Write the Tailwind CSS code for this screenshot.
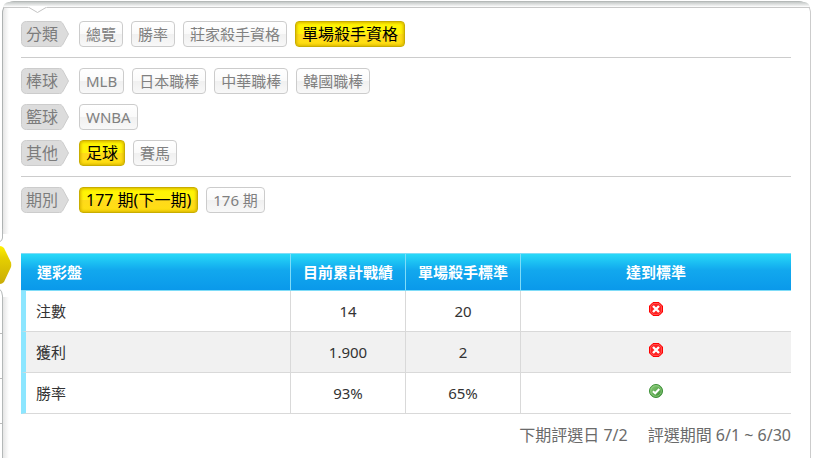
<!DOCTYPE html>
<html lang="zh-Hant">
<head>
  <meta charset="UTF-8" />
  <meta name="viewport" content="width=device-width, initial-scale=1" />
  <title>單場殺手資格</title>
  <script src="https://cdn.jsdelivr.net/npm/@tailwindcss/browser@4"></script>
  <style>
    body {
      font-family: "Noto Sans", "Noto Sans CJK TC", sans-serif;
    }

    .label {
      width: 48px;
      height: 26px;
      padding-left: 5px;
      margin-right: 2px;
      font-size: 16px;
      line-height: 26px;
      color: #7c7c7c;
      position: relative;
    }

    .label svg {
      position: absolute;
      inset: 0;
      z-index: -1;
    }

    .tag {
      height: 26px;
      padding: 0 6px;
      border: 1px solid #ccc;
      border-radius: 4px;
      font-size: 15px;
      line-height: 24px;
      white-space: nowrap;
      color: #808080;
      background: linear-gradient(#fff, #fafafa 50%, #f0f0f0 50%, #f8f8f8);
    }

    .tag.on {
      border-color: #c9ae00;
      font-size: 16px;
      color: #000;
      background: linear-gradient(#fff600, #fff20c 50%, #ffd91c 50%, #ffe010);
      box-shadow: inset 0 0 3px 1px #d8b400;
    }
  </style>
</head>
<body class="bg-white min-h-screen flex flex-col">
  <!-- Shapes shared by the rows -->
  <svg class="absolute" width="0" height="0" aria-hidden="true">
    <defs>
      <linearGradient id="gold" x1="0" y1="0" x2="0" y2="1">
        <stop offset="0" stop-color="#fff000" />
        <stop offset="0.3" stop-color="#e6d000" />
        <stop offset="1" stop-color="#c9ac08" />
      </linearGradient>
      <linearGradient id="green" x1="0" y1="0" x2="1" y2="1">
        <stop offset="0" stop-color="#8fd07c" />
        <stop offset="1" stop-color="#35882e" />
      </linearGradient>
      <symbol id="arrow" viewBox="0 0 48 26">
        <path d="M5.500 .5H38.500Q40.500 .5 41.500 2L47.500 13L41.500 24Q40.500 25.500 38.500 25.500H5.500Q.5 25.500 .5 20.500V5.500Q.5 .5 5.500 .5Z" fill="#dcdcdc" stroke="#ccc" />
      </symbol>
      <symbol id="no" viewBox="0 0 14 14">
        <path d="M4 .5H10L13.500 4V10L10 13.500H4L.5 10V4Z" fill="#f22" stroke="#f00" stroke-linejoin="round" />
        <path d="M4.500 1.500H9.500L12.500 4.500V9.500L9.500 12.500H4.500L1.500 9.500V4.500Z" fill="none" stroke="#ff5050" />
        <path d="M4 4L10 10M10 4L4 10" stroke="#fff" stroke-width="2.400" />
      </symbol>
      <symbol id="yes" viewBox="0 0 14 14">
        <circle cx="7" cy="7" r="6.500" fill="url(#green)" stroke="#3b8f36" />
        <circle cx="7" cy="7" r="5.300" fill="none" stroke="#9bd58c" stroke-opacity=".7" />
        <path d="M3.900 7.200L6.200 9.300L10.300 5" fill="none" stroke="#fff" stroke-width="2" />
      </symbol>
    </defs>
  </svg>

  <main class="relative isolate flex-1 ml-[2px] mr-[2px] mt-[1px] pl-[18px] pr-[19px] border-l border-r border-t border-l-[#aeb2b2] border-r-[#ccc] border-t-[#b5b9b8] rounded-t-[12px] bg-linear-to-r from-[#e6e6e6] to-white to-[6px]">
    <div class="absolute inset-x-0 top-0 h-[6px] -z-10 rounded-t-[11px] bg-linear-to-b from-[#c4c8c7] to-white border-b border-[#c8c8c8]"></div>
    <svg class="absolute left-[25px] top-[4px]" width="19" height="8" aria-hidden="true">
      <path d="M0 0H19V1L9.500 7L0 1Z" fill="#fff" />
      <path d="M1 1.500L9.500 6.500L18 1.500" fill="none" stroke="#c4c4c4" />
    </svg>

    <!-- Side menu marker -->
    <svg class="absolute -left-[3px] top-[227px]" width="14" height="230" aria-hidden="true">
      <path d="M0 5H10V68H0Z" fill="#fff" />
      <path d="M2.500 0V9Q2 12 0 12.500M2.500 230V67Q2 62 0 60.500" fill="none" stroke="#b4b8b8" />
      <path d="M0 17Q2 17 4 19L11 33.500Q11.500 36 11 38L4 53Q2 55 0 55Z" fill="url(#gold)" />
      <path d="M0 104.500H2M0 149.500H2M0 194.500H2" stroke="#bbb" />
    </svg>

    <!-- Filters -->
    <nav class="pt-[19px]">
      <div class="flex gap-2 pb-[10px] border-b border-[#ccc]">
        <div class="label"><svg width="48" height="26"><use href="#arrow" /></svg>分類</div>
        <a href="#all" class="tag">總覽</a>
        <a href="#rate" class="tag">勝率</a>
        <a href="#banker" class="tag">莊家殺手資格</a>
        <a href="#single" class="tag on">單場殺手資格</a>
      </div>
      <div class="flex flex-col gap-[10px] py-[10px] border-b border-[#ccc]">
        <div class="flex gap-2">
          <div class="label"><svg width="48" height="26"><use href="#arrow" /></svg>棒球</div>
          <a href="#mlb" class="tag">MLB</a>
          <a href="#npb" class="tag">日本職棒</a>
          <a href="#cpbl" class="tag">中華職棒</a>
          <a href="#kbo" class="tag">韓國職棒</a>
        </div>
        <div class="flex gap-2">
          <div class="label"><svg width="48" height="26"><use href="#arrow" /></svg>籃球</div>
          <a href="#wnba" class="tag">WNBA</a>
        </div>
        <div class="flex gap-2">
          <div class="label"><svg width="48" height="26"><use href="#arrow" /></svg>其他</div>
          <a href="#soccer" class="tag on">足球</a>
          <a href="#horse" class="tag">賽馬</a>
        </div>
      </div>
      <div class="flex gap-2 pt-[10px]">
        <div class="label"><svg width="48" height="26"><use href="#arrow" /></svg>期別</div>
        <a href="#177" class="tag on">177 期(下一期)</a>
        <a href="#176" class="tag">176 期</a>
      </div>
    </nav>

    <!-- Standards -->
    <table class="mt-10 w-full table-fixed border-separate border-spacing-0 text-[15px] leading-5 text-[#333] text-center">
      <thead>
        <tr class="h-[38px] text-white bg-linear-to-b from-[#2adcf8] via-[#12a8ee] via-45% to-[#0a98ea]">
          <th class="pl-4 text-left border-y border-r border-[#7fdcf8]">運彩盤</th>
          <th class="w-[115px] border-y border-r border-[#7fdcf8]">目前累計戰績</th>
          <th class="w-[115px] border-y border-r border-[#7fdcf8]">單場殺手標準</th>
          <th class="border-y border-[#7fdcf8]">達到標準</th>
        </tr>
      </thead>
      <tbody>
        <tr class="h-[41px]">
          <td class="pl-[10px] text-left border-l-[5px] border-l-[#8ce6ff] border-b border-r border-b-[#d9d9d9] border-r-[#d9d9d9]">注數</td>
          <td class="border-b border-r border-[#d9d9d9]">14</td>
          <td class="border-b border-r border-[#d9d9d9]">20</td>
          <td class="pb-1 border-b border-[#d9d9d9]"><svg class="mx-auto" width="14" height="14" role="img" aria-label="未達"><use href="#no" /></svg></td>
        </tr>
        <tr class="h-[41px] bg-[#f1f1f1]">
          <td class="pl-[10px] text-left border-l-[5px] border-l-[#8ce6ff] border-b border-r border-b-[#d9d9d9] border-r-[#d9d9d9]">獲利</td>
          <td class="border-b border-r border-[#d9d9d9]">1.900</td>
          <td class="border-b border-r border-[#d9d9d9]">2</td>
          <td class="pb-1 border-b border-[#d9d9d9]"><svg class="mx-auto" width="14" height="14" role="img" aria-label="未達"><use href="#no" /></svg></td>
        </tr>
        <tr class="h-[41px]">
          <td class="pl-[10px] text-left border-l-[5px] border-l-[#8ce6ff] border-b border-r border-b-[#d9d9d9] border-r-[#d9d9d9]">勝率</td>
          <td class="border-b border-r border-[#d9d9d9]">93%</td>
          <td class="border-b border-r border-[#d9d9d9]">65%</td>
          <td class="pb-1 border-b border-[#d9d9d9]"><svg class="mx-auto" width="14" height="14" role="img" aria-label="達到"><use href="#yes" /></svg></td>
        </tr>
      </tbody>
    </table>

    <p class="mt-[9px] flex justify-end gap-5 text-base text-[#6a6a6a]">
      <span>下期評選日 7/2</span>
      <span>評選期間 6/1 ~ 6/30</span>
    </p>
  </main>
</body>
</html>
